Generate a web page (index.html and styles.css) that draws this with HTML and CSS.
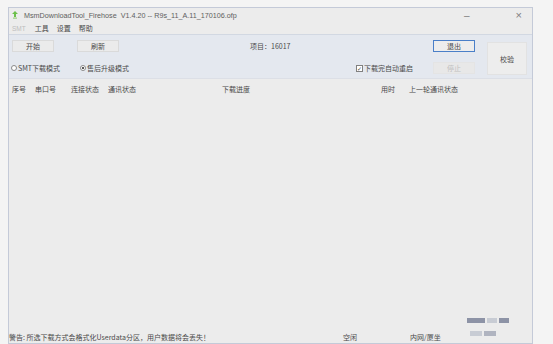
FILE: index.html
```html
<!DOCTYPE html>
<html>
<head>
<meta charset="utf-8">
<link rel="stylesheet" href="styles.css">
</head>
<body>
<div class="window">
  <div class="titlebar">
    <svg class="appicon" width="6" height="8" viewBox="0 0 6 8"><path d="M3 0 L6 3 L4 3 L4 6 L2 6 L2 3 L0 3 Z" fill="#6cc04a"/><rect x="1" y="6.5" width="4" height="1.2" fill="#9bd07e"/></svg>
    <span class="title">MsmDownloadTool_Firehose&nbsp; V1.4.20 -- R9s_11_A.11_170106.ofp</span>
    <span class="wbtn min">–</span>
    <span class="wbtn close">×</span>
  </div>
  <div class="menubar">
    <span class="menu smt">SMT</span>
    <span class="menu">工具</span>
    <span class="menu">设置</span>
    <span class="menu">帮助</span>
  </div>
  <div class="panel">
    <div class="panel-main">
      <div class="prow">
        <span class="cell c-start"><span class="btn">开始</span></span>
        <span class="cell c-refresh"><span class="btn">刷新</span></span>
        <span class="cell c-proj">项目：16017</span>
        <span class="btn focus">退出</span>
      </div>
      <div class="prow row2">
        <span class="radio c-r1"><span class="rc"></span>SMT下载模式</span>
        <span class="radio c-r2"><span class="rc on"></span>售后升级模式</span>
        <span class="check c-chk"><span class="cb">✓</span>下载完自动重启</span>
        <span class="btn disabled">停止</span>
      </div>
    </div>
    <span class="btn big">校验</span>
  </div>
  <div class="header">
    <span class="h1">序号</span>
    <span class="h2">串口号</span>
    <span class="h3">连接状态</span>
    <span class="h4">通讯状态</span>
    <span class="h5">下载进度</span>
    <span class="h6">用时</span>
    <span class="h7">上一轮通讯状态</span>
  </div>
  <div class="list"></div>
  <div class="status">
    <span class="warn">警告: 所选下载方式会格式化Userdata分区，用户数据将会丢失！</span>
    <span class="idle">空闲</span>
    <span class="net">内网/厦坐</span>
  </div>
</div>
<div class="tray tray1"><i class="t1"></i><i class="t2"></i><i class="t3"></i></div>
<div class="tray tray2"><i class="t4"></i><i class="t5"></i></div>
</body>
</html>
```
FILE: styles.css
```css
html, body {
  margin: 0;
  padding: 0;
}
body {
  width: 553px;
  height: 344px;
  background: #f4f4f4;
  font-family: "Noto Sans CJK SC", "Noto Sans", sans-serif;
  font-size: 7px;
  color: #4a4a4a;
  overflow: hidden;
  position: relative;
}
.window {
  margin: 7px 0 0 8px;
  width: 523px;
  height: 336px;
  border: 1px solid #c4cad8;
  border-bottom: none;
  background: #ececec;
  display: flex;
  flex-direction: column;
}
.titlebar {
  height: 14px;
  display: flex;
  align-items: center;
  padding-left: 3px;
}
.appicon { margin-right: 6px; }
.title {
  font-family: "Liberation Sans", sans-serif;
  font-size: 7.2px;
  color: #606060;
  flex: 1;
}
.wbtn {
  font-family: "Liberation Sans", sans-serif;
  color: #808080;
  font-size: 10px;
}
.min { margin-right: 46px; }
.close { margin-right: 10px; font-size: 11px; }
.menubar {
  height: 12px;
  display: flex;
  align-items: center;
  padding-left: 3px;
  gap: 8px;
}
.menu.smt { color: #bdbdbd; font-family: "Liberation Sans", sans-serif; font-size: 6.5px; margin-right: 1px; }
.panel {
  height: 43px;
  background: #e4e8ef;
  border-top: 1px solid #d2d8e2;
  display: flex;
  padding-left: 3px;
}
.panel-main {
  flex: 1;
  display: flex;
  flex-direction: column;
}
.prow {
  display: flex;
  align-items: center;
  height: 12px;
  margin-top: 5px;
}
.row2 { margin-top: 10px; }
.cell { flex: none; display: flex; align-items: center; }
.c-start { width: 65px; }
.c-refresh { width: 173px; }
.c-proj { width: 183px; }
.btn {
  display: flex;
  align-items: center;
  justify-content: center;
  background: #ebebeb;
  border: 1px solid #dadada;
  box-sizing: border-box;
  height: 12px;
  width: 42px;
  flex: none;
}
.focus { border: 1px solid #4a7fc8; background: #ededed; }
.disabled { color: #c0c0c0; border-color: #e4e4e4; background: #e8e8e8; }
.radio, .check {
  display: flex;
  align-items: center;
  flex: none;
}
.c-r1 { width: 69px; margin-left: -1px; }
.c-r2 { width: 276px; }
.c-chk { width: 77px; }
.rc {
  width: 6px;
  height: 6px;
  border: 1px solid #8a8a8a;
  border-radius: 50%;
  background: #fff;
  margin-right: 1px;
  box-sizing: border-box;
  display: flex;
  align-items: center;
  justify-content: center;
}
.rc.on::after {
  content: "";
  width: 2px;
  height: 2px;
  border-radius: 50%;
  background: #222;
}
.cb {
  width: 7px;
  height: 7px;
  border: 1px solid #808080;
  box-sizing: border-box;
  background: #fff;
  font-size: 6px;
  line-height: 5px;
  text-align: center;
  margin-right: 1px;
  font-family: "DejaVu Sans", sans-serif;
}
.big {
  width: 40px;
  height: 33px;
  margin: 7px 5px 0 0;
  background: #ededed;
  border-color: #e2e2e2;
}
.header {
  height: 19px;
  display: flex;
  align-items: center;
  border-top: 1px solid #dcdfe6;
}
.header span { flex: none; }
.h1 { margin-left: 3px; }
.h2 { margin-left: 9px; }
.h3 { margin-left: 15px; }
.h4 { margin-left: 9px; }
.h5 { margin-left: 86px; }
.h6 { margin-left: 131px; }
.h7 { margin-left: 14px; }
.list { flex: 1; }
.status {
  height: 13px;
  display: flex;
  align-items: center;
  border-bottom: 1px solid #c4cad8;
}
.status span { flex: none; }
.warn { width: 334px; white-space: nowrap; }
.idle { width: 67px; }
.tray {
  position: absolute;
  display: flex;
  gap: 2px;
}
.tray i { display: block; height: 5px; }
.tray1 { left: 467px; top: 318px; }
.t1 { width: 18px; background: #8d93a6; }
.t2 { width: 10px; background: #c8ccd4; }
.t3 { width: 10px; background: #8d93a6; }
.tray2 { left: 470px; top: 331px; }
.t4 { width: 12px; background: #c8ccd4; }
.t5 { width: 12px; background: #b0b4c0; }
```
